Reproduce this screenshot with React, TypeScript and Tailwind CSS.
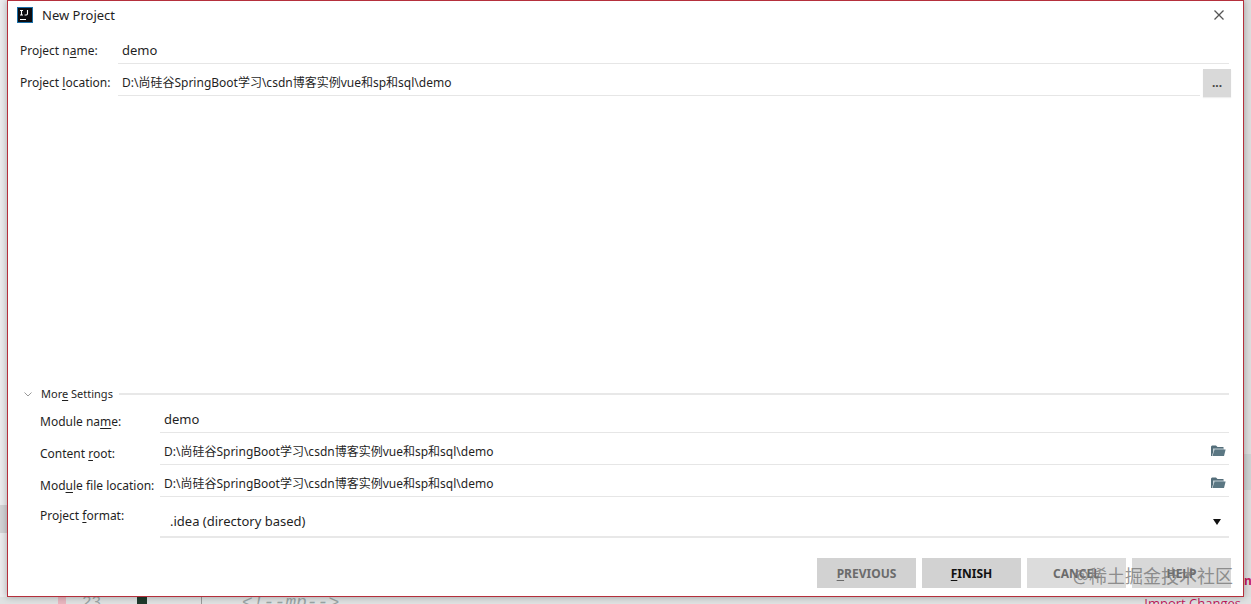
import { useState } from "react";

const FolderIcon = () => (
  <svg width="15" height="12" viewBox="0 0 15 12" aria-hidden="true">
    <path d="M0 11V1.5L1 0.5H5L6.5 2H12.5V4H3L1 11Z" fill="#546e7a" />
    <path d="M2 3.4H13V5H3.6L2 9.5Z" fill="#c3d0d5" />
    <path d="M3.6 4.6H14.6L13 11H1.4Z" fill="#5b7783" />
  </svg>
);

const IdeaLogo = () => (
  <svg width="16" height="16" viewBox="0 0 16 16" aria-hidden="true">
    <rect width="16" height="16" fill="#1a6fa8" />
    <rect x="1" y="1" width="14" height="14" fill="#0c0c10" />
    <path d="M3 3.5H6M4.5 3.5V8M3 8H6M10.5 3V6.6Q10.5 8 9.2 8H7.6" stroke="#fff" strokeWidth="1.1" fill="none" />
    <rect x="3" y="12" width="6" height="1" fill="#fff" />
  </svg>
);

// 带快捷键下划线的文字
const Mnemonic = ({ text, start, length = 1 }: { text: string; start: number; length?: number }) => (
  <>
    {text.slice(0, start)}
    <span className="underline underline-offset-2">{text.slice(start, start + length)}</span>
    {text.slice(start + length)}
  </>
);

const labelClass = "shrink-0 text-[12px] leading-[18px] whitespace-nowrap";
const fieldClass = "min-w-0 flex-1 bg-transparent pt-1 pl-1 outline-none";
const pathClass = "min-w-0 flex-1 bg-transparent pt-[6px] pl-1 text-[12px] outline-none";
const actionClass = "h-[30px] w-[99px] pt-px text-[12px] font-bold";

const App = () => {
  const [name, setName] = useState<string>("demo");
  const [location, setLocation] = useState<string>("D:\\尚硅谷SpringBoot学习\\csdn博客实例vue和sp和sql\\demo");
  const [moduleName, setModuleName] = useState<string>("demo");
  const [contentRoot, setContentRoot] = useState<string>(location);
  const [moduleFile, setModuleFile] = useState<string>(location);
  const [open, setOpen] = useState<boolean>(true);

  return (
    <div className="flex h-screen flex-col overflow-hidden bg-[#dfe2e2] font-['Noto_Sans','Noto_Sans_CJK_SC',sans-serif] text-[13px] leading-4 text-[#1f1f1f]">
      <div className="flex min-h-0 flex-1">
        {/* 左侧背景 */}
        <div className="flex w-[7px] flex-col justify-end bg-[#ececee] pb-16">
          <div className="h-7 bg-[#d3d3d5]" />
        </div>

        {/* 新建项目窗口 */}
        <main className="relative z-10 flex min-w-0 flex-1 flex-col border border-[#b5303c] bg-white px-3 pb-2 shadow-[0_0_7px_rgba(0,0,0,0.3)]">
          <header className="-mx-1 flex h-[31px] items-center justify-between pb-[3px]">
            <div className="flex items-center gap-[9px] pl-px">
              <IdeaLogo />
              <h1>New Project</h1>
            </div>
            <button aria-label="Close" className="flex h-6 w-8 items-center justify-center">
              <svg width="10" height="10" viewBox="0 0 10 10" stroke="#555" strokeWidth="1.3">
                <path d="M0.5 0.5L9.5 9.5M9.5 0.5L0.5 9.5" />
              </svg>
            </button>
          </header>

          <div className="flex h-8 pr-[2px]">
            <label htmlFor="name" className={`${labelClass} w-[98px] pt-[10px]`}>
              <Mnemonic text="Project name:" start={9} />
            </label>
            <div className="flex flex-1 border-b border-[#e6e6e6]">
              <input id="name" className={fieldClass} value={name} onChange={(e) => setName(e.target.value)} />
            </div>
          </div>
          <div className="flex h-8">
            <label htmlFor="location" className={`${labelClass} w-[98px] pt-[10px]`}>
              <Mnemonic text="Project location:" start={8} />
            </label>
            <div className="flex flex-1 border-b border-[#e6e6e6]">
              <input id="location" className={pathClass} value={location} onChange={(e) => setLocation(e.target.value)} />
            </div>
            <button aria-label="Browse" className="mt-[5px] ml-[3px] h-7 w-7 bg-[#d9d9d9] text-[12px] font-bold text-[#444] shadow-[0_1px_1px_#eee]">
              ...
            </button>
          </div>

          <div className="flex-1" />

          {/* 更多设置 */}
          <div className="flex h-[14px] items-center gap-[6px] pr-[2px] pl-1">
            <button className="flex items-center gap-[9px] whitespace-nowrap" onClick={() => setOpen(!open)}>
              <svg width="8" height="5" viewBox="0 0 8 5" fill="none" stroke="#999">
                <path d="M0.5 0.5L4 4L7.5 0.5" />
              </svg>
              <span className="text-[11px]">
                <Mnemonic text="More Settings" start={3} />
              </span>
            </button>
            <div className="h-[2px] flex-1 bg-[#e8e8e8]" />
          </div>

          {open && (
            <div className="pr-[2px] pl-5">
              <div className="flex h-8">
                <label htmlFor="module" className={`${labelClass} w-[120px] pt-3`}>
                  <Mnemonic text="Module name:" start={9} length={1} />
                </label>
                <div className="flex flex-1 border-b border-[#e6e6e6]">
                  <input id="module" className={fieldClass} value={moduleName} onChange={(e) => setModuleName(e.target.value)} />
                </div>
              </div>
              <div className="flex h-8">
                <label htmlFor="root" className={`${labelClass} w-[120px] pt-3`}>
                  <Mnemonic text="Content root:" start={8} />
                </label>
                <div className="flex flex-1 border-b border-[#e6e6e6] pr-[3px]">
                  <input id="root" className={pathClass} value={contentRoot} onChange={(e) => setContentRoot(e.target.value)} />
                  <button aria-label="Browse content root" className="pt-1">
                    <FolderIcon />
                  </button>
                </div>
              </div>
              <div className="flex h-8">
                <label htmlFor="file" className={`${labelClass} w-[120px] pt-3`}>
                  <Mnemonic text="Module file location:" start={3} />
                </label>
                <div className="flex flex-1 border-b border-[#e6e6e6] pr-[3px]">
                  <input id="file" className={pathClass} value={moduleFile} onChange={(e) => setModuleFile(e.target.value)} />
                  <button aria-label="Browse module file location" className="pt-1">
                    <FolderIcon />
                  </button>
                </div>
              </div>
              <div className="flex h-[41px]">
                <label htmlFor="format" className={`${labelClass} w-[120px] pt-[10px]`}>
                  <Mnemonic text="Project format:" start={8} />
                </label>
                <div className="relative flex flex-1 border-b-2 border-[#e8e8e8]">
                  <select id="format" className="flex-1 appearance-none bg-transparent pt-2 pl-[10px] outline-none">
                    <option>.idea (directory based)</option>
                    <option>.ipr (file based)</option>
                  </select>
                  <svg className="pointer-events-none absolute top-[22px] right-2" width="8" height="6" viewBox="0 0 8 6">
                    <path d="M0 0H8L4 6Z" fill="#111" />
                  </svg>
                </div>
              </div>
            </div>
          )}

          <footer className="mt-5 flex justify-end gap-[6px]">
            <button className={`${actionClass} bg-[#d2d2d2] text-[#6b6b6b]`}>
              <Mnemonic text="PREVIOUS" start={0} />
            </button>
            <button className={`${actionClass} bg-[#d2d2d2] text-[#111]`}>
              <Mnemonic text="FINISH" start={0} />
            </button>
            <button className={`${actionClass} bg-[#dcdcdc] text-[#6b6b6b]`}>CANCEL</button>
            <button className={`${actionClass} bg-[#d8d8d8] text-[#6b6b6b]`}>HELP</button>
          </footer>

          <p className="pointer-events-none absolute right-[10px] bottom-2 text-[18px] leading-6 whitespace-nowrap text-[#777]/80">
            @稀土掘金技术社区
          </p>
        </main>

        {/* 右侧背景 */}
        <div className="flex w-[7px] flex-col justify-end overflow-hidden bg-[#dedede]">
          <div className="mb-[83px] h-9 bg-[#ced3d3]" />
          <span className="mb-2 text-[12px] font-bold text-[#c2185b]">n</span>
        </div>
      </div>

      {/* 底部露出的编辑器 */}
      <div className="flex h-[7px] items-start overflow-hidden text-[#9aa5a5]">
        <div className="ml-[58px] h-full w-2 bg-[#e8b6bf]" />
        <span className="ml-4 w-[55px] font-['Liberation_Mono',monospace] text-[16px] leading-3">23</span>
        <div className="h-full w-[10px] bg-[#1f3a2c]" />
        <div className="ml-[54px] h-full w-px bg-[#999]" />
        <code className="ml-10 font-['Liberation_Mono',monospace] text-[18px] leading-3 whitespace-nowrap italic">&lt;!--mp--&gt;</code>
        <span className="mr-[10px] ml-auto font-['Open_Sans',sans-serif] leading-3 whitespace-nowrap text-[#c2185b]">Import Changes</span>
      </div>
    </div>
  );
};

export default App;
